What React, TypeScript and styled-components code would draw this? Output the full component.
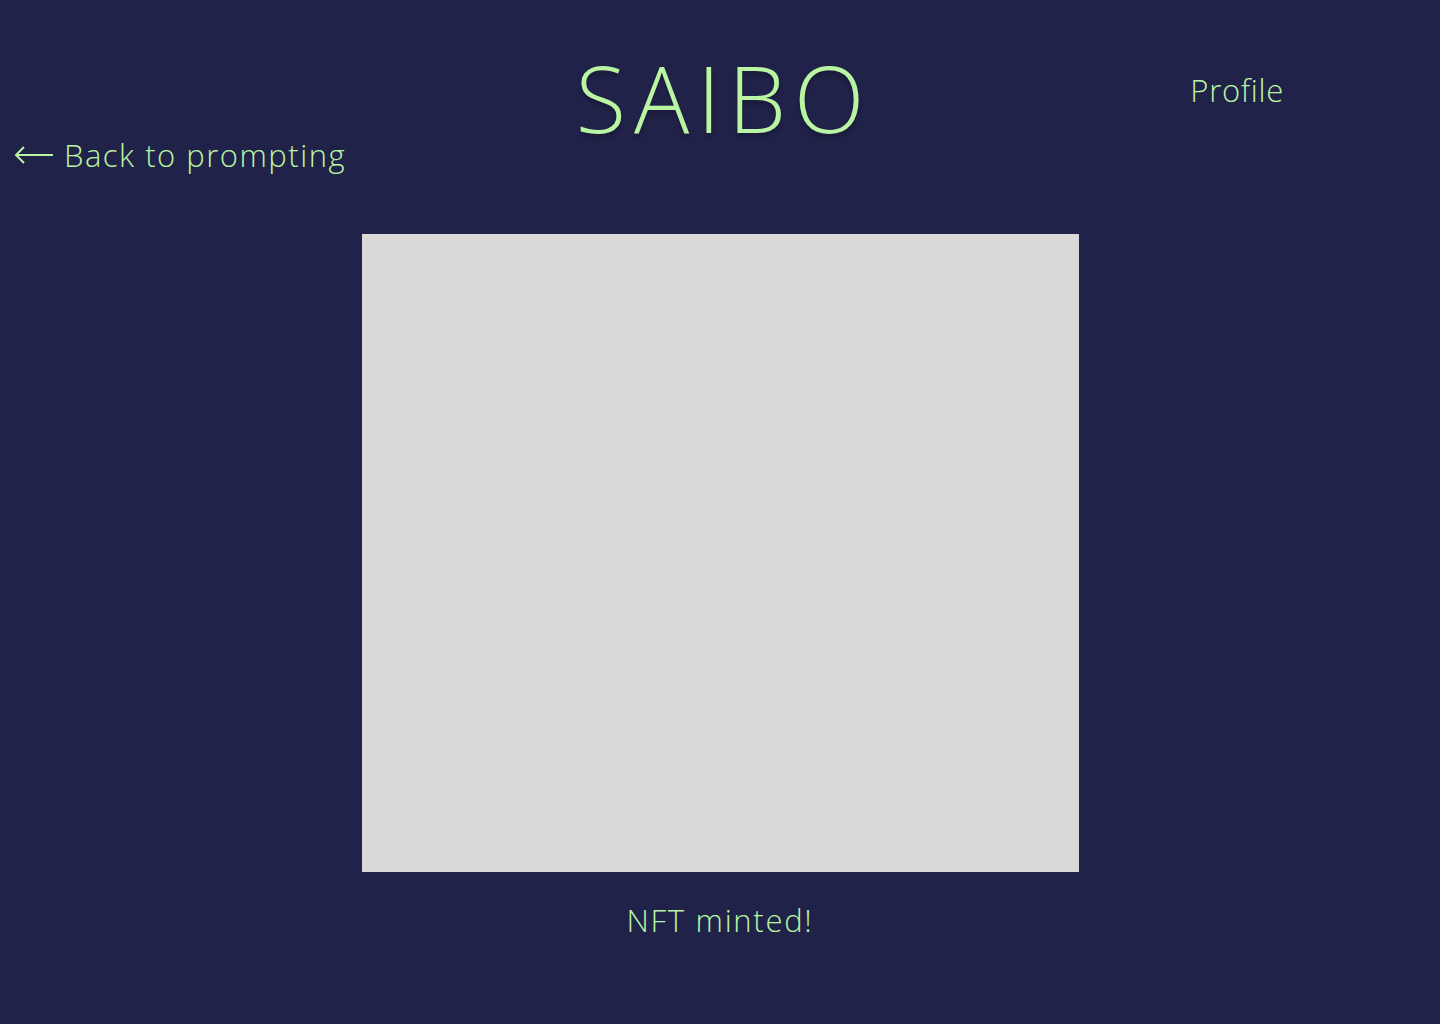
import React from 'react';
import styled, { createGlobalStyle } from 'styled-components';

const GlobalStyle = createGlobalStyle`
  html, body {
    margin: 0;
    padding: 0;
    background-color: #212249;
  }

  body {
    font-family: 'Open Sans', 'Liberation Sans', sans-serif;
    font-weight: 300;
    color: #b9f5a2;
  }
`;

const StyledPage = styled.div`
  min-height: 1024px;
  display: flex;
  flex-direction: column;
  align-items: center;
`;

const StyledHeader = styled.header`
  width: 100%;
  display: grid;
  grid-template-columns: 1fr auto 1fr;
  align-items: start;
`;

const BackLink = styled.a`
  justify-self: start;
  display: flex;
  align-items: center;
  gap: 10px;
  margin: 135px 0 0 14px;
  font-size: 31px;
  letter-spacing: 1.5px;
  line-height: 40px;
  color: inherit;
  text-decoration: none;
  cursor: pointer;
`;

const Title = styled.h1`
  margin: 48px 0 0;
  padding-left: 8px;
  font-size: 92px;
  font-weight: 300;
  line-height: 100px;
  letter-spacing: 8px;
  text-shadow: 0 4px 4px rgba(0, 0, 0, 0.25);
`;

const ProfileLink = styled.a`
  justify-self: end;
  margin: 70px 156px 0 0;
  font-size: 31px;
  letter-spacing: 0.7px;
  line-height: 40px;
  color: inherit;
  text-decoration: none;
  cursor: pointer;
`;

const Frame = styled.div`
  width: 717px;
  height: 638px;
  margin-top: 59px;
  background-color: #d9d9d9;
`;

const Caption = styled.p`
  margin: 28px 0 0;
  font-size: 31px;
  letter-spacing: 1.7px;
  line-height: 40px;
`;

const ArrowIcon = () => (
  <svg width="40" height="20" viewBox="0 0 40 20" fill="none">
    <path d="M39 10H2M10 2L2 10L10 18" stroke="currentColor" strokeWidth="2" />
  </svg>
);

const App = () => {
  return (
    <StyledPage>
      <GlobalStyle />
      <StyledHeader>
        <BackLink>
          <ArrowIcon />
          Back to prompting
        </BackLink>
        <Title>SAIBO</Title>
        <ProfileLink>Profile</ProfileLink>
      </StyledHeader>
      <Frame />
      <Caption>NFT minted!</Caption>
    </StyledPage>
  );
};

export default App;
